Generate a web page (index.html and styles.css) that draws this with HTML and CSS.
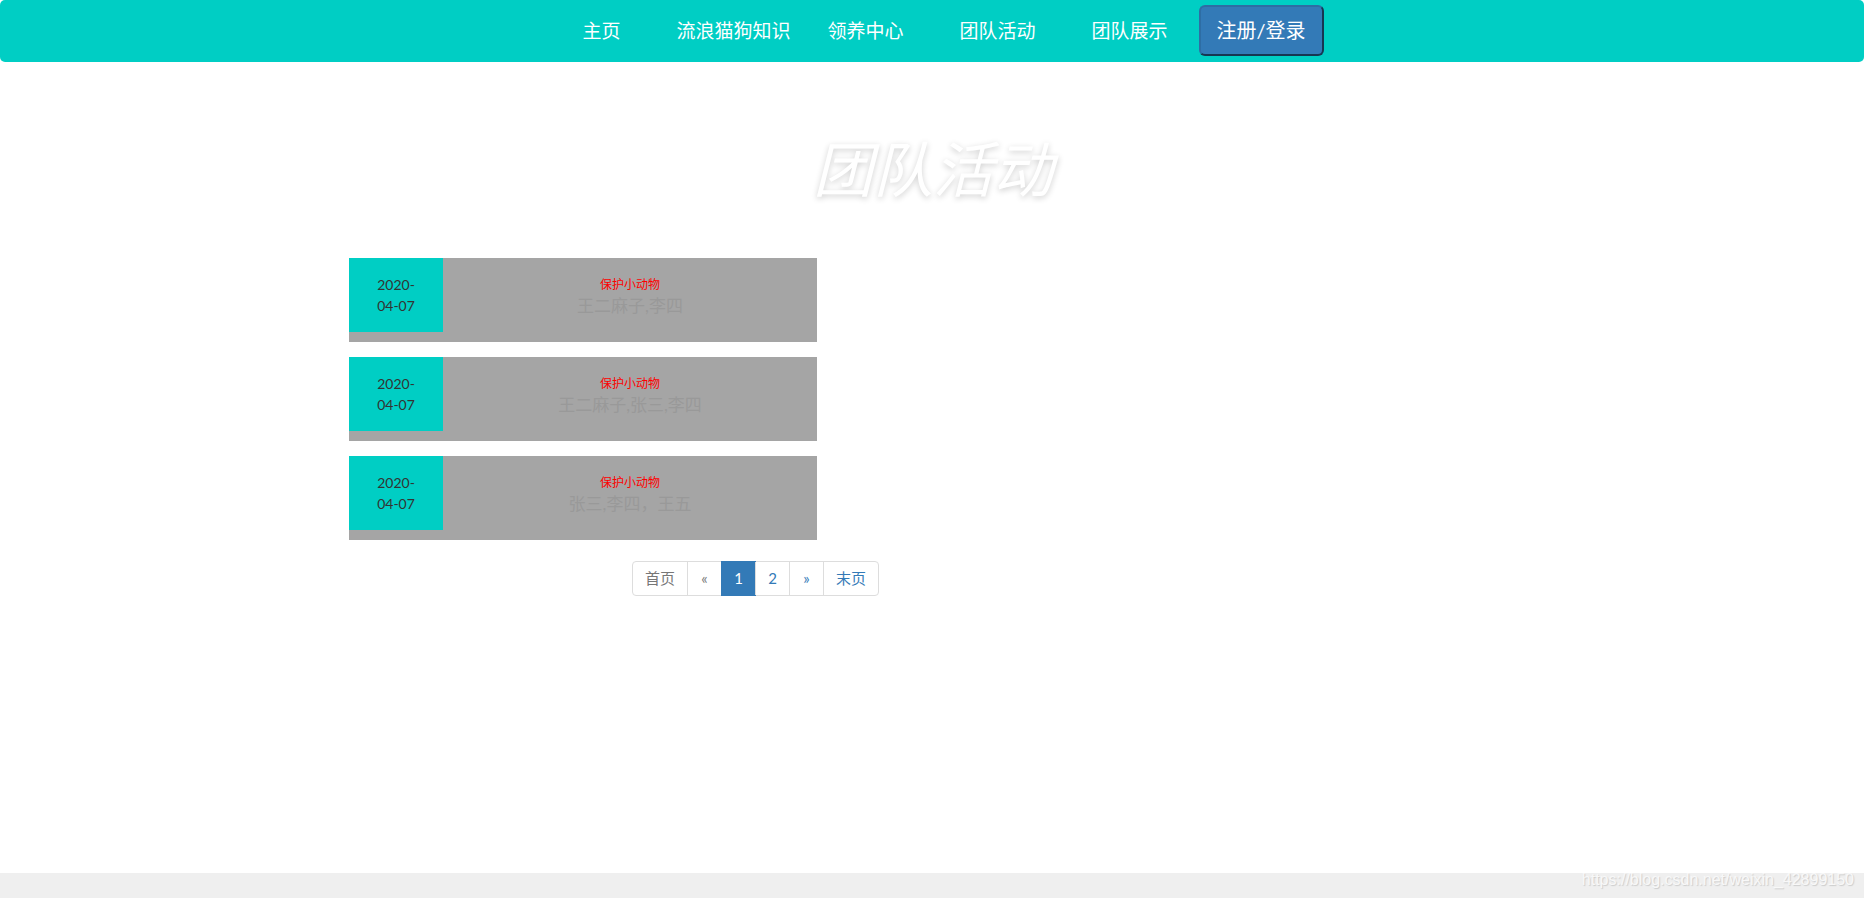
FILE: index.html
```html
<!DOCTYPE html>
<html lang="zh-CN">
<head>
<meta charset="utf-8">
<meta name="viewport" content="width=device-width, initial-scale=1">
<title>团队活动</title>
<link rel="stylesheet" href="styles.css">
</head>
<body>
<nav class="navbar">
  <ul class="nav-list">
    <li class="nav-home"><a href="#">主页</a></li>
    <li class="nav-knowledge"><a href="#">流浪猫狗知识</a></li>
    <li><a href="#">领养中心</a></li>
    <li><a href="#">团队活动</a></li>
    <li><a href="#">团队展示</a></li>
  </ul>
  <button class="login" type="button">注册/登录</button>
</nav>
<main class="content">
  <h1 class="title">团队活动</h1>
  <section class="activities">
    <article class="activity">
      <time class="date" datetime="2020-04-07">2020-04-07</time>
      <div class="detail"><a class="name" href="#">保护小动物</a><p class="people">王二麻子,李四</p></div>
    </article>
    <article class="activity">
      <time class="date" datetime="2020-04-07">2020-04-07</time>
      <div class="detail"><a class="name" href="#">保护小动物</a><p class="people">王二麻子,张三,李四</p></div>
    </article>
    <article class="activity">
      <time class="date" datetime="2020-04-07">2020-04-07</time>
      <div class="detail"><a class="name" href="#">保护小动物</a><p class="people">张三,李四，王五</p></div>
    </article>
  </section>
  <ul class="pagination">
    <li><a class="disabled" href="#">首页</a></li>
    <li><a class="disabled" href="#">«</a></li>
    <li><a class="active" href="#">1</a></li>
    <li><a href="#">2</a></li>
    <li><a href="#">»</a></li>
    <li><a href="#">末页</a></li>
  </ul>
</main>
<footer class="footer">
  <span class="source">https://blog.csdn.net/weixin_42899150</span>
</footer>
</body>
</html>
```
FILE: styles.css
```css
* {
  box-sizing: border-box;
}

body {
  margin: 0;
  min-height: 100vh;
  display: flex;
  flex-direction: column;
  background: #fff;
  color: #333;
  font-family: Lato, "Noto Sans CJK SC", sans-serif;
  font-size: 14px;
  line-height: 21px;
}

a {
  color: inherit;
  text-decoration: none;
}

ul {
  list-style: none;
  margin: 0;
  padding: 0;
}

.navbar {
  display: flex;
  justify-content: center;
  align-items: flex-start;
  gap: 31px;
  height: 62px;
  padding: 5px 0 0 42px;
  border-radius: 5px;
  background: #00cec4;
}

.nav-list {
  display: flex;
  gap: 56px;
  color: #fff;
  font-size: 19px;
  line-height: 52px;
}

.nav-knowledge {
  margin-right: -19px;
}

.login {
  height: 51px;
  padding: 0 16px 3px;
  border: 2px solid;
  border-color: #2e6da4 #173652 #173652 #2e6da4;
  border-radius: 6px;
  background: #337ab7;
  color: #fff;
  font-family: inherit;
  font-size: 20px;
}

.content {
  flex: 1;
  width: 100%;
  max-width: 1170px;
  margin: 0 auto;
  padding: 65px 2px 0;
}

.title {
  margin: 0 0 47px;
  padding-left: 2px;
  color: #fff;
  font-size: 60px;
  font-style: italic;
  font-weight: 400;
  line-height: 84px;
  text-align: center;
  text-shadow: 0 2px 6px rgba(0, 0, 0, 0.2);
}

.activities {
  display: grid;
  gap: 15px;
  width: 100%;
  max-width: 468px;
}

.activity {
  display: flex;
  align-items: flex-start;
  padding-bottom: 10px;
  background: #a5a5a5;
}

.date {
  width: 94px;
  padding: 16px 24px;
  background: #00cec4;
  text-align: center;
}

.detail {
  flex: 1;
  padding-top: 16px;
  text-align: center;
}

.name {
  display: block;
  color: #f00;
  font-size: 12px;
}

.people {
  margin: 0;
  color: #999;
  font-size: 17px;
}

.pagination {
  display: flex;
  width: max-content;
  margin: 21px auto 0 283px;
  border: 1px solid #ddd;
  border-radius: 4px;
  color: #337ab7;
  font-size: 15px;
  text-align: center;
}

.pagination li {
  min-width: 34px;
}

.pagination li + li {
  border-left: 1px solid #ddd;
}

.pagination a {
  display: block;
  padding: 6px 12px;
}

.pagination .disabled {
  color: #777;
}

.pagination .active {
  margin: -1px;
  padding: 7px 12px;
  background: #337ab7;
  color: #fff;
}

.footer {
  height: 25px;
  padding-right: 10px;
  background: #efefef;
  text-align: right;
}

.source {
  display: block;
  color: #f8f8f8;
  font-family: "Liberation Sans", Arial, sans-serif;
  font-size: 16px;
  line-height: 14px;
  text-shadow: 1px 1px 1px #ccc;
}
```
